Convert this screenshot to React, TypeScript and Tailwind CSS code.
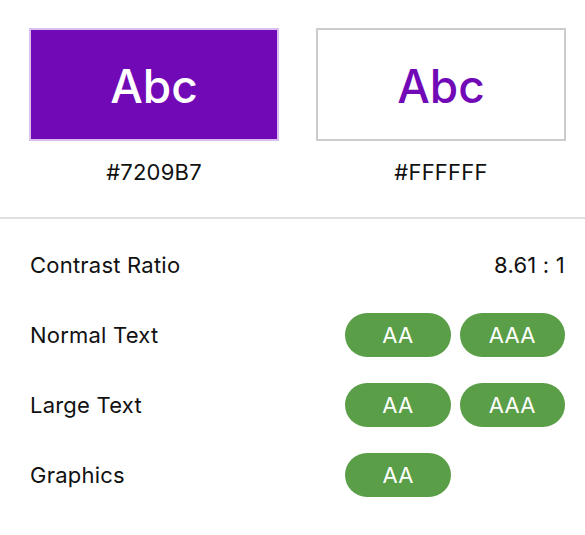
export default function App() {
  const rows = [
    { label: "Normal Text", badges: ["AA", "AAA"] },
    { label: "Large Text", badges: ["AA", "AAA"] },
    { label: "Graphics", badges: ["AA"] },
  ];
  return (
    <div className="w-[585px] h-[535px] bg-white text-[#111] font-['Inter',sans-serif]">
      <div className="flex gap-[37px] pl-[29px] pr-[20px] pt-[28px] h-[217px]">
        <div className="flex flex-col items-center">
          <div className="w-[250px] h-[113px] bg-[#7209B7] border-2 border-[#d8bff0] flex items-center justify-center text-white text-[46px] font-medium leading-none pt-[3px]">
            Abc
          </div>
          <div className="mt-[15px] text-[22px] tracking-[0.01em]">#7209B7</div>
        </div>
        <div className="flex flex-col items-center">
          <div className="w-[250px] h-[113px] bg-white border-2 border-[#cccccc] flex items-center justify-center text-[#7209B7] text-[46px] font-medium leading-none pt-[3px]">
            Abc
          </div>
          <div className="mt-[15px] text-[22px] tracking-[0.01em]">#FFFFFF</div>
        </div>
      </div>
      <div className="h-[2px] bg-[#e0e0e0]" />
      <div className="pl-[30px] pr-[20px] pt-[24px] flex flex-col gap-[26px] text-[22px] tracking-[0.01em]">
        <div className="flex justify-between items-center h-[44px]">
          <span>Contrast Ratio</span>
          <span>8.61 : 1</span>
        </div>
        {rows.map((r) => (
          <div key={r.label} className="flex items-center h-[44px]">
            <span className="flex-1">{r.label}</span>
            <div className="flex gap-[9px] w-[220px]">
              {r.badges.map((b, i) => (
                <div
                  key={i}
                  className="w-[106px] h-[44px] rounded-full bg-[#5a9e47] text-white flex items-center justify-center"
                >
                  {b}
                </div>
              ))}
            </div>
          </div>
        ))}
      </div>
    </div>
  );
}
